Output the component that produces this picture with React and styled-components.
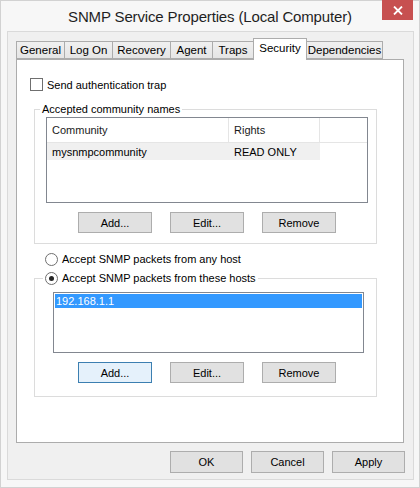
import React from "react";
import styled, { createGlobalStyle } from "styled-components";

const Global = createGlobalStyle`
  html, body { margin: 0; padding: 0; background: #ffffff; }
  body {
    font-family: "Liberation Sans", Arial, sans-serif;
    font-size: 11px;
    color: #000;
  }
  * { box-sizing: border-box; }
`;

const Window = styled.div`
  width: 420px;
  height: 488px;
  background: #f7f7f7;
  border: 1px solid #d2d2d2;
  display: flex;
  flex-direction: column;
`;

const TitleBar = styled.div`
  height: 30px;
  display: grid;
  grid-template-columns: 1fr auto 1fr;
`;

const Title = styled.div`
  grid-column: 2;
  line-height: 31px;
  font-size: 15px;
  letter-spacing: -0.15px;
  color: #1f1f1f;
  white-space: nowrap;
`;

const CloseButton = styled.div`
  grid-column: 3;
  justify-self: end;
  align-self: start;
  margin-top: -1px;
  margin-right: 6px;
  width: 31px;
  height: 20px;
  background: #c75050;
  display: flex;
  align-items: center;
  justify-content: center;
`;

const Client = styled.div`
  flex: 1;
  margin: 0 5px 7px 6px;
  border: 1px solid #dadada;
  background: #f0f0f0;
  display: flex;
  flex-direction: column;
  padding: 6px 9px 6px 8px;
`;

const TabStrip = styled.div`
  height: 21px;
  display: flex;
  align-items: flex-end;
  position: relative;
  z-index: 1;
`;

const Tab = styled.div`
  width: ${(p) => p.$w}px;
  height: ${(p) => (p.$active ? 22 : 18)}px;
  margin-bottom: ${(p) => (p.$active ? -1 : 0)}px;
  margin-left: ${(p) => (p.$first ? 0 : -1)}px;
  border: 1px solid #acacac;
  border-bottom: ${(p) => (p.$active ? "none" : "1px solid #acacac")};
  background: ${(p) =>
    p.$active ? "#ffffff" : "linear-gradient(#f0f0f0, #e5e5e5)"};
  display: flex;
  align-items: ${(p) => (p.$active ? "flex-start" : "center")};
  padding-top: ${(p) => (p.$active ? 3 : 0)}px;
  justify-content: center;
  font-size: 11.5px;
  color: #000;
  position: relative;
  z-index: ${(p) => (p.$active ? 2 : 1)};
  white-space: nowrap;
`;

const Panel = styled.div`
  flex: 1;
  background: #ffffff;
  border: 1px solid #acacac;
`;

const CheckRow = styled.label`
  margin: 18px 0 0 13px;
  height: 13px;
  display: flex;
  align-items: center;
  gap: 4px;
`;

const CheckBox = styled.span`
  width: 13px;
  height: 13px;
  border: 1px solid #6f6f6f;
  background: #ffffff;
  flex: none;
`;

const Group = styled.fieldset`
  margin: ${(p) => p.$mt}px 26px 0 17px;
  min-width: 0;
  border: 1px solid #dcdcdc;
  padding: ${(p) => p.$pad};
`;

const Legend = styled.legend`
  line-height: 14px;
  padding: 0 2px;
  margin-left: ${(p) => p.$ml}px;
  display: flex;
  align-items: center;
  gap: 4px;
  white-space: nowrap;
`;

const ListView = styled.div`
  height: 86px;
  border: 1px solid #828790;
  background: #ffffff;
`;

const LvRow = styled.div`
  display: grid;
  grid-template-columns: 182px 91px 1fr;
  height: ${(p) => (p.$header ? 25 : 17)}px;
  border-bottom: ${(p) => (p.$header ? "1px solid #e5e5e5" : "none")};
`;

const LvCell = styled.div`
  display: flex;
  align-items: center;
  padding-left: 5px;
  background: ${(p) => (p.$shade ? "#f0f0f0" : "transparent")};
  border-right: ${(p) => (p.$divider ? "1px solid #e5e5e5" : "none")};
  color: ${(p) => (p.$header ? "#1a1a1a" : "#000")};
  white-space: nowrap;
`;

const ButtonRow = styled.div`
  display: flex;
  justify-content: flex-start;
  gap: 18px;
  margin-top: 9px;
  padding-left: ${(p) => p.$pl}px;
`;

const Button = styled.div`
  width: ${(p) => p.$w || 74}px;
  height: ${(p) => p.$h || 21}px;
  border: 1px solid ${(p) => (p.$focused ? "#3c7fb1" : "#adadad")};
  background: ${(p) => (p.$focused ? "#e5f1fb" : "#e1e1e1")};
  display: flex;
  align-items: center;
  justify-content: center;
  color: #000;
`;

const RadioRow = styled.label`
  margin: 8px 0 0 28px;
  height: 14px;
  display: flex;
  align-items: center;
  gap: 4px;
`;

const Radio = styled.span`
  width: 13px;
  height: 13px;
  border-radius: 50%;
  border: 1px solid #6f6f6f;
  background: #ffffff;
  flex: none;
  display: flex;
  align-items: center;
  justify-content: center;
  &::after {
    content: "";
    width: 5px;
    height: 5px;
    border-radius: 50%;
    background: ${(p) => (p.$checked ? "#262626" : "transparent")};
  }
`;

const ListBox = styled.div`
  height: 61px;
  border: 1px solid #828790;
  background: #ffffff;
  padding: 1px;
`;

const ListItem = styled.div`
  height: 14px;
  line-height: 14px;
  padding-left: 1px;
  background: ${(p) => (p.$selected ? "#3399ff" : "transparent")};
  color: ${(p) => (p.$selected ? "#ffffff" : "#000")};
`;

const Footer = styled.div`
  margin-top: 8px;
  margin-right: -1px;
  display: flex;
  justify-content: flex-end;
  gap: 8px;
`;

const tabs = [
  ["General", 49],
  ["Log On", 49],
  ["Recovery", 59],
  ["Agent", 43],
  ["Traps", 42],
  ["Security", 54],
  ["Dependencies", 77],
];

export default function App() {
  return (
    <>
      <Global />
      <Window>
        <TitleBar>
          <Title>SNMP Service Properties (Local Computer)</Title>
          <CloseButton>
            <svg width="10" height="9" viewBox="0 0 10 9">
              <path d="M1 0.5 L9 8.5 M9 0.5 L1 8.5" stroke="#ffffff" strokeWidth="1.8" />
            </svg>
          </CloseButton>
        </TitleBar>
        <Client>
          <TabStrip>
            {tabs.map(([name, w], i) => (
              <Tab key={name} $w={w} $first={i === 0} $active={name === "Security"}>
                {name}
              </Tab>
            ))}
          </TabStrip>
          <Panel>
            <CheckRow>
              <CheckBox />
              Send authentication trap
            </CheckRow>
            <Group $mt={11} $pad="1px 8px 10px 11px">
              <Legend $ml={-6}>Accepted community names</Legend>
              <ListView>
                <LvRow $header>
                  <LvCell $header $divider>Community</LvCell>
                  <LvCell $header $divider>Rights</LvCell>
                  <LvCell $header />
                </LvRow>
                <LvRow>
                  <LvCell $shade>mysnmpcommunity</LvCell>
                  <LvCell $shade>READ ONLY</LvCell>
                  <LvCell />
                </LvRow>
              </ListView>
              <ButtonRow $pl={32}>
                <Button>Add...</Button>
                <Button>Edit...</Button>
                <Button>Remove</Button>
              </ButtonRow>
            </Group>
            <RadioRow>
              <Radio />
              Accept SNMP packets from any host
            </RadioRow>
            <Group $mt={5} $pad="7px 12px 13px 18px">
              <Legend $ml={-10}>
                <Radio $checked />
                Accept SNMP packets from these hosts
              </Legend>
              <ListBox>
                <ListItem $selected>192.168.1.1</ListItem>
              </ListBox>
              <ButtonRow $pl={25}>
                <Button $focused>Add...</Button>
                <Button>Edit...</Button>
                <Button>Remove</Button>
              </ButtonRow>
            </Group>
          </Panel>
          <Footer>
            <Button $w={73} $h={22}>OK</Button>
            <Button $w={73} $h={22}>Cancel</Button>
            <Button $w={73} $h={22}>Apply</Button>
          </Footer>
        </Client>
      </Window>
    </>
  );
}
